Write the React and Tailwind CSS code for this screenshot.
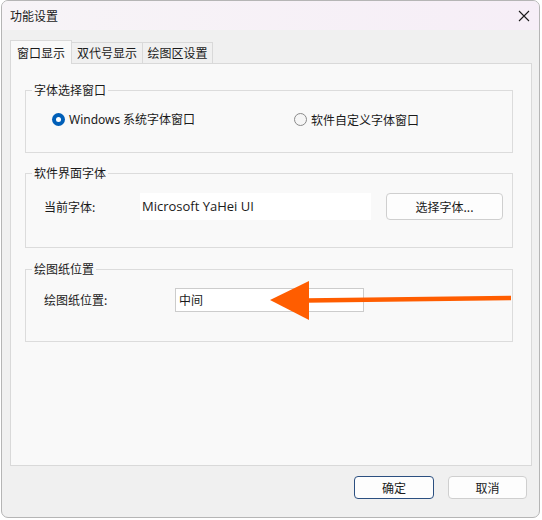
import { useState } from "react";

const cjk = { fontFamily: '"Noto Sans CJK SC", "Noto Sans", sans-serif' };

function Radio({ checked, label, onClick }) {
  return (
    <button onClick={onClick} className="flex items-center gap-[4px] text-[12px] text-[#1a1a1a]">
      {checked ? (
        <span className="w-[13px] h-[13px] rounded-full bg-[#005fb8] flex items-center justify-center">
          <span className="w-[5px] h-[5px] rounded-full bg-white" />
        </span>
      ) : (
        <span className="w-[13px] h-[13px] rounded-full border border-[#8a8a8a] bg-[#f6f6f6]" />
      )}
      <span>{label}</span>
    </button>
  );
}

function Group({ title, className, children }) {
  return (
    <fieldset className={`border border-[#dcdcdc] ml-[14px] mr-[18px] ${className}`}>
      <legend className="ml-[6px] px-[2px] text-[12px] leading-[16px] text-[#1a1a1a]">{title}</legend>
      {children}
    </fieldset>
  );
}

export default function App() {
  const [tab, setTab] = useState(0);
  const [useSystem, setUseSystem] = useState(true);
  const tabs = ["窗口显示", "双代号显示", "绘图区设置"];

  return (
    <div className="w-[542px] h-[520px] bg-white relative" style={cjk}>
      <div className="ml-[1px] w-[539px] h-[518px] border border-[#b5b5b5] rounded-[7px] overflow-hidden bg-[#f0f0f0] flex flex-col">
        {/* title bar */}
        <div className="h-[29px] shrink-0 flex items-center justify-between pl-[8px] pr-[9px] bg-gradient-to-r from-[#f7f4f7] to-[#f6eef7]">
          <span className="text-[12px] text-[#1a1a1a] mt-[1px]">功能设置</span>
          <svg width="12" height="12" viewBox="0 0 12 12" className="mt-[1px]">
            <path d="M1 1L11 11M11 1L1 11" stroke="#1a1a1a" strokeWidth="1.1" />
          </svg>
        </div>

        {/* tabs */}
        <div className="flex items-end pl-[8px] mt-[9px] h-[24px] shrink-0">
          {tabs.map((t, i) =>
            i === tab ? (
              <button
                key={t}
                onClick={() => setTab(i)}
                className="h-[24px] w-[62px] border border-[#d9d9d9] border-b-0 bg-[#f9f9f9] text-[12px] text-[#1a1a1a] relative z-10 -mb-px"
              >
                {t}
              </button>
            ) : (
              <button
                key={t}
                onClick={() => setTab(i)}
                className={`h-[21px] border border-[#d9d9d9] border-b-0 border-l-0 bg-[#f0f0f0] text-[12px] text-[#1a1a1a] ${i === 1 ? "w-[71px]" : "w-[70px]"}`}
              >
                {t}
              </button>
            )
          )}
        </div>

        {/* tab page */}
        <div className="ml-[8px] mr-[7px] h-[403px] shrink-0 bg-[#f9f9f9] border border-[#d9d9d9] flex flex-col">
          <Group title="字体选择窗口" className="mt-[18px] h-[71px]">
            <div className="flex items-center mt-[12px] pl-[26px]">
              <div className="w-[242px]">
                <Radio checked={useSystem} label={<><span style={{ fontFamily: '"Noto Sans", sans-serif' }}>Windows</span> 系统字体窗口</>} onClick={() => setUseSystem(true)} />
              </div>
              <Radio checked={!useSystem} label="软件自定义字体窗口" onClick={() => setUseSystem(false)} />
            </div>
          </Group>

          <Group title="软件界面字体" className="mt-[12px] h-[83px]">
            <div className="flex items-center mt-[12px] pl-[18px]">
              <span className="w-[96px] text-[12px] text-[#1a1a1a]">当前字体:</span>
              <div className="w-[231px] h-[27px] bg-white flex items-center pl-[2px] text-[13px] text-[#1a1a1a]" style={{ fontFamily: '"Open Sans", "Noto Sans", sans-serif' }}>
                Microsoft YaHei UI
              </div>
              <button className="ml-[15px] w-[117px] h-[27px] rounded-[4px] border border-[#cfcfcf] bg-[#fdfdfd] text-[12px] text-[#1a1a1a]">
                选择字体...
              </button>
            </div>
          </Group>

          <Group title="绘图纸位置" className="mt-[13px] h-[81px]">
            <div className="flex items-center mt-[11px] pl-[18px]">
              <span className="w-[131px] text-[12px] text-[#1a1a1a]">绘图纸位置:</span>
              <div className="w-[189px] h-[24px] bg-white border border-[#cccccc] flex items-center justify-between pl-[3px] pr-[8px] text-[12px] text-[#1a1a1a]">
                <span>中间</span>
                <span className="w-[2px] h-[2px] bg-[#555]" />
              </div>
            </div>
          </Group>
        </div>

        {/* dialog buttons */}
        <div className="flex justify-end gap-[14px] pr-[12px] mt-[10px]">
          <button className="w-[80px] h-[23px] rounded-[4px] border-[1.5px] border-[#2b4f80] bg-[#fdfdfd] text-[12px] text-[#1a1a1a]">
            确定
          </button>
          <button className="w-[79px] h-[23px] rounded-[4px] border border-[#cfcfcf] bg-[#fdfdfd] text-[12px] text-[#1a1a1a]">
            取消
          </button>
        </div>
      </div>

      {/* annotation arrow */}
      <svg className="absolute left-0 top-0 pointer-events-none" width="542" height="520">
        <path d="M306 300.5L511 298" stroke="#ff5d00" strokeWidth="4.5" />
        <polygon points="270,300 309,281 309,320" fill="#ff5d00" />
      </svg>
    </div>
  );
}
